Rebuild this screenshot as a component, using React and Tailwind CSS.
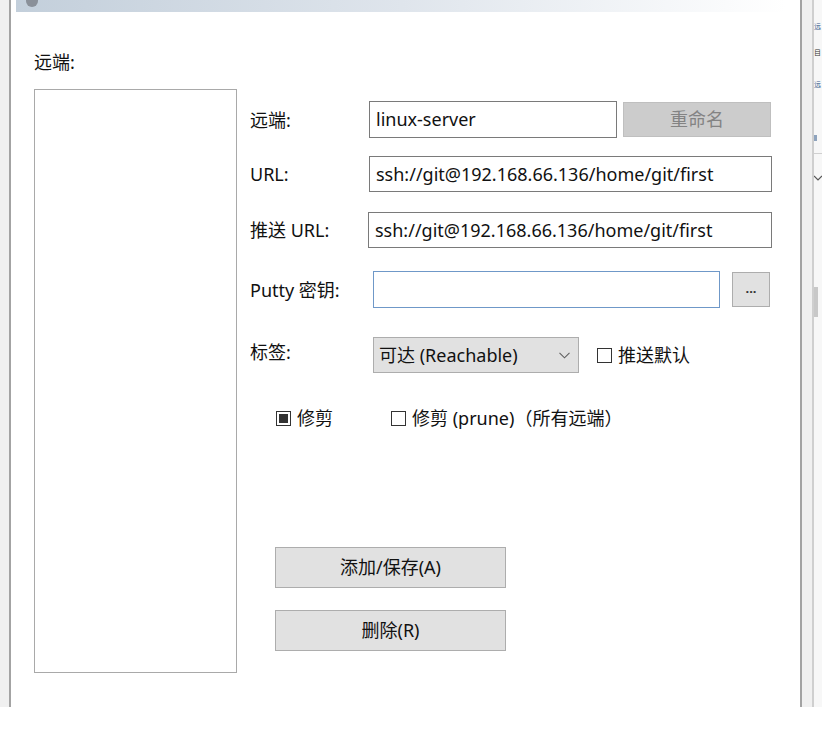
import React from "react";

function Checkbox({ checked, label, className = "" }) {
  return (
    <div className={`flex items-center ${className}`}>
      <span className="w-[15px] h-[15px] border border-[#333333] bg-white flex items-center justify-center shrink-0">
        {checked && <span className="w-[9px] h-[9px] bg-[#333333]"></span>}
      </span>
      <span className="ml-[6px] text-[18px] text-[#111111] leading-[22px] whitespace-nowrap">{label}</span>
    </div>
  );
}

function FormRow({ label, children, className = "" }) {
  return (
    <div className={`flex items-center ${className}`}>
      <div className="w-[119px] shrink-0 text-[18px] text-[#111111] leading-[22px] whitespace-nowrap">{label}</div>
      {children}
    </div>
  );
}

export default function App() {
  return (
    <div className="w-[822px] h-[731px] bg-white overflow-hidden font-['Noto_Sans','Noto_Sans_CJK_SC',sans-serif]">
      <div className="flex h-[707px]">
        {/* left edge of the window */}
        <div className="w-[9px] bg-[#f0f0f0]"></div>
        <div className="w-[2px] bg-[#a3a3a3]"></div>

        {/* dialog body */}
        <div className="w-[789px] flex flex-col">
          <div className="ml-[5px] h-[12px] w-[770px] bg-gradient-to-r from-[#c3cfdb] via-[#dfe5ec] to-white relative">
            <div className="absolute left-[10px] top-0 w-[12px] h-[7px] rounded-b-full bg-[#8a9099]"></div>
          </div>

          <div className="flex">
            {/* remotes list */}
            <div className="ml-[23px] w-[203px] flex flex-col">
              <div className="mt-[39px] h-[22px] text-[18px] leading-[22px] text-[#111111]">远端:</div>
              <div className="mt-[16px] h-[584px] border border-[#a9a9a9] bg-white"></div>
            </div>

            {/* form */}
            <div className="ml-[13px] w-[522px] flex flex-col">
              <FormRow label="远端:" className="mt-[89px] h-[37px]">
                <div className="w-[248px] h-[37px] border border-[#7a7a7a] bg-white flex items-center px-[6px] text-[18px] text-[#111111]">
                  linux-server
                </div>
                <button className="ml-[6px] w-[148px] h-[35px] bg-[#cccccc] border border-[#bfbfbf] text-[18px] text-[#838383]">
                  重命名
                </button>
              </FormRow>

              <FormRow label="URL:" className="mt-[18px] h-[36px]">
                <div className="w-[403px] h-[36px] border border-[#7a7a7a] bg-white flex items-center px-[6px] text-[18px] text-[#111111] whitespace-nowrap">
                  ssh://git@192.168.66.136/home/git/first
                </div>
              </FormRow>

              <FormRow label="推送 URL:" className="mt-[20px] h-[36px]">
                <div className="-ml-px w-[404px] h-[36px] border border-[#7a7a7a] bg-white flex items-center px-[6px] text-[18px] text-[#111111] whitespace-nowrap">
                  ssh://git@192.168.66.136/home/git/first
                </div>
              </FormRow>

              <FormRow label="Putty 密钥:" className="mt-[23px] h-[37px]">
                <div className="ml-[4px] w-[347px] h-[37px] border border-[#6f98c8] bg-white"></div>
                <button className="ml-[12px] w-[38px] h-[35px] bg-[#e1e1e1] border border-[#adadad] text-[13px] font-bold leading-none text-[#333333] flex items-center justify-center pb-[2px]">
                  ...
                </button>
              </FormRow>

              <FormRow label={<span className="relative -top-[3px]">标签:</span>} className="mt-[29px] h-[36px]">
                <div className="ml-[4px] w-[206px] h-[36px] border border-[#adadad] bg-[#e1e1e1] flex items-center pl-[5px] pr-[8px] text-[18px] text-[#111111]">
                  <span className="flex-1 whitespace-nowrap">可达 (Reachable)</span>
                  <svg width="11" height="7" viewBox="0 0 11 7" className="mt-[1px]">
                    <path d="M0.5 0.8 L5.5 5.8 L10.5 0.8" fill="none" stroke="#606060" strokeWidth="1.1" />
                  </svg>
                </div>
                <Checkbox label="推送默认" className="ml-[18px]" />
              </FormRow>

              <div className="mt-[34px] h-[22px] flex items-center ml-[26px]">
                <Checkbox checked label="修剪" />
                <Checkbox label="修剪 (prune)（所有远端）" className="ml-[58px]" />
              </div>

              <button className="mt-[118px] ml-[25px] w-[231px] h-[41px] bg-[#e1e1e1] border border-[#adadad] text-[18px] text-[#111111]">
                添加/保存(A)
              </button>
              <button className="mt-[22px] ml-[25px] w-[231px] h-[41px] bg-[#e1e1e1] border border-[#adadad] text-[18px] text-[#111111]">
                删除(R)
              </button>
            </div>
          </div>
        </div>

        {/* right edge and the window behind */}
        <div className="w-[2px] bg-[#a3a3a3]"></div>
        <div className="w-[10px] bg-[#f0f0f0]"></div>
        <div className="w-[2px] bg-[#cfcfcf]"></div>
        <div className="w-[8px] bg-[#f7f7f7] flex flex-col overflow-hidden">
          <span className="mt-[22px] text-[7px] leading-[10px] text-[#3a5f8f] whitespace-nowrap">远</span>
          <span className="mt-[16px] text-[7px] leading-[10px] text-[#333333] whitespace-nowrap">目</span>
          <span className="mt-[22px] text-[7px] leading-[10px] text-[#3a5f8f] whitespace-nowrap">远</span>
          <div className="mt-[45px] h-[6px] w-[3px] bg-[#8ea3bd]"></div>
          <div className="mt-[12px] h-px bg-[#d0d0d0]"></div>
          <svg width="8" height="8" viewBox="0 0 8 8" className="mt-[20px]">
            <path d="M0 2 L4 6 L8 2" fill="none" stroke="#555555" strokeWidth="1.2" />
          </svg>
          <div className="mt-[105px] h-[30px] w-[4px] bg-[#c8c8c8]"></div>
        </div>
      </div>
    </div>
  );
}
